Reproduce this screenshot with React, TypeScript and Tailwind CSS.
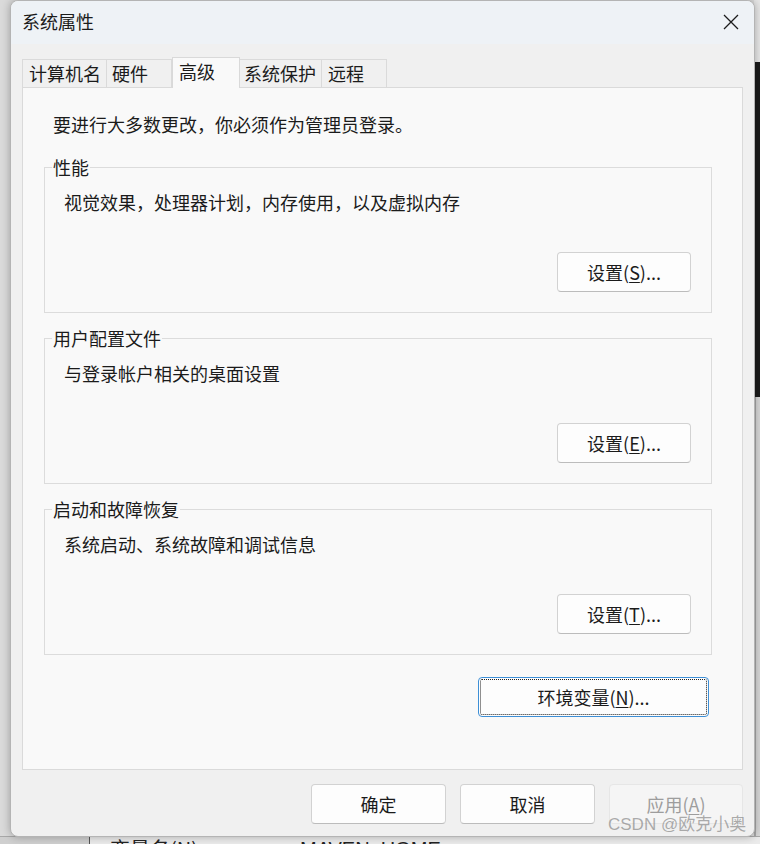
import React from "react";

const tabs = [
  { label: "计算机名", cls: "w-[85px] pl-[6px]" },
  { label: "硬件", cls: "w-[65px] pl-[5px]" },
  { label: "高级", cls: "w-[68px] pl-[6px]", active: true },
  { label: "系统保护", cls: "w-[82px] pl-[4px]" },
  { label: "远程", cls: "w-[65px] pl-[6px]" },
];

function Btn({
  children,
  className = "",
}: {
  children: React.ReactNode;
  className?: string;
}) {
  return (
    <div
      className={`flex items-center justify-center rounded-[4px] border border-[#d2d2d2] border-b-[#bcbcbc] bg-[#fdfdfd] text-[18px] leading-none text-[#1b1b1b] ${className}`}
    >
      {children}
    </div>
  );
}

function Group({
  title,
  desc,
  btn,
}: {
  title: string;
  desc: string;
  btn: React.ReactNode;
}) {
  return (
    <fieldset className="flex flex-col border border-[#dcdcdc] pb-[20px]">
      <legend className="ml-[7px] px-[1px] text-[18px] leading-[24px] text-[#1b1b1b]">
        {title}
      </legend>
      <div className="mt-[11px] pl-[19px] text-[18px] leading-[24px] text-[#1b1b1b]">
        {desc}
      </div>
      <div className="mt-[38px] flex justify-end pr-[20px]">
        <Btn className="h-[40px] w-[134px]">{btn}</Btn>
      </div>
    </fieldset>
  );
}

export default function App() {
  return (
    <div className="relative h-[844px] w-[760px] overflow-hidden bg-[#dadada] [font-family:'Noto_Sans_CJK_SC','Noto_Sans',sans-serif]">
      {/* desktop behind the dialog */}
      <div className="absolute right-0 top-0 h-[62px] w-[6px] bg-[#e6e6e6]" />
      <div className="absolute right-0 top-[62px] h-[335px] w-[6px] bg-[#1b1b1b]" />
      <div className="absolute right-0 top-[397px] h-[447px] w-[6px] border-l-2 border-[#a6a6a6] bg-[#d6d6d6]" />
      <div className="absolute bottom-0 left-0 flex h-[8px] w-[760px] overflow-hidden border-t border-[#a8a8a8] bg-[#ebebeb]">
        <div className="h-full w-[89px] bg-[#cfcfcf]" />
        <div className="h-full w-px bg-[#555555]" />
        <div className="relative h-full flex-1">
          <span className="absolute left-[20px] top-[2px] text-[20px] leading-[20px] text-[#222]">
            变量名(N)
          </span>
          <span className="absolute left-[210px] top-[2px] text-[20px] leading-[20px] text-[#222] [font-family:'Liberation_Sans',sans-serif]">
            MAVEN_HOME
          </span>
        </div>
      </div>

      {/* dialog window */}
      <div className="relative ml-[10px] flex h-[837px] w-[745px] flex-col overflow-hidden rounded-[8px] border border-[#b4b4b4] bg-[#f0f0f0] shadow-[0_0_8px_rgba(0,0,0,0.28)]">
        {/* title bar */}
        <div className="flex h-[43px] shrink-0 items-center justify-between bg-[#eef2f6] pb-[3px] pl-[11px] pr-[15px]">
          <span className="text-[18px] leading-none text-[#1b1b1b]">系统属性</span>
          <svg width="16" height="16" viewBox="0 0 16 16" className="mt-[1px]">
            <path d="M1 1 L15 15 M15 1 L1 15" stroke="#1b1b1b" strokeWidth="1.3" fill="none" />
          </svg>
        </div>

        {/* tabs */}
        <div className="mt-[13px] flex h-[30px] shrink-0 items-end px-[11px]">
          {tabs.map((t) =>
            t.active ? (
              <div
                key={t.label}
                className={`relative z-10 -mb-[1px] flex h-[31px] items-center border border-b-0 border-[#d9d9d9] bg-[#f9f9f9] pb-[4px] text-[18px] leading-none text-[#1b1b1b] ${t.cls}`}
              >
                {t.label}
              </div>
            ) : (
              <div
                key={t.label}
                className={`flex h-[28px] items-center border border-b-0 border-l-0 border-[#dadada] bg-[#f0f0f0] pb-[2px] text-[18px] leading-none text-[#1b1b1b] first:border-l ${t.cls}`}
              >
                {t.label}
              </div>
            )
          )}
        </div>

        {/* tab panel */}
        <div className="mx-[11px] flex flex-1 flex-col border border-[#dadada] bg-[#f9f9f9] pl-[21px] pr-[30px]">
          <div className="mt-[24px] pl-[9px] text-[18px] leading-[24px] text-[#1b1b1b]">
            要进行大多数更改，你必须作为管理员登录。
          </div>
          <div className="mt-[19px] flex flex-col gap-[13px]">
            <Group
              title="性能"
              desc="视觉效果，处理器计划，内存使用，以及虚拟内存"
              btn={
                <>
                  设置(<span className="underline underline-offset-2">S</span>)...
                </>
              }
            />
            <Group
              title="用户配置文件"
              desc="与登录帐户相关的桌面设置"
              btn={
                <>
                  设置(<span className="underline underline-offset-2">E</span>)...
                </>
              }
            />
            <Group
              title="启动和故障恢复"
              desc="系统启动、系统故障和调试信息"
              btn={
                <>
                  设置(<span className="underline underline-offset-2">T</span>)...
                </>
              }
            />
          </div>
          <div className="mt-[22px] flex justify-end pr-[3px]">
            <div className="relative flex h-[40px] w-[231px] items-center justify-center rounded-[4px] border border-[#3d8fd6] bg-[#fdfdfd] text-[18px] leading-none text-[#1b1b1b]">
              <div className="absolute inset-[1px] rounded-[2px] border border-dotted border-[#222]" />
              环境变量(<span className="underline underline-offset-2">N</span>)...
            </div>
          </div>
        </div>

        {/* bottom buttons */}
        <div className="mb-[12px] mt-[14px] flex shrink-0 justify-end gap-[14px] pr-[11px]">
          <Btn className="h-[40px] w-[135px]">确定</Btn>
          <Btn className="h-[40px] w-[135px]">取消</Btn>
          <div className="flex h-[40px] w-[134px] items-center justify-center rounded-[4px] border border-[#e6e6e6] bg-[#f5f5f5] text-[18px] leading-none text-[#9d9d9d]">
            应用(<span className="underline underline-offset-2">A</span>)
          </div>
        </div>
      </div>

      {/* watermark */}
      <div className="pointer-events-none absolute left-[608px] top-[814px] text-[17px] leading-[22px] text-[rgba(120,120,120,0.6)] [font-family:'Liberation_Sans','Noto_Sans_CJK_SC',sans-serif]">
        CSDN @欧克小奥
      </div>
    </div>
  );
}
